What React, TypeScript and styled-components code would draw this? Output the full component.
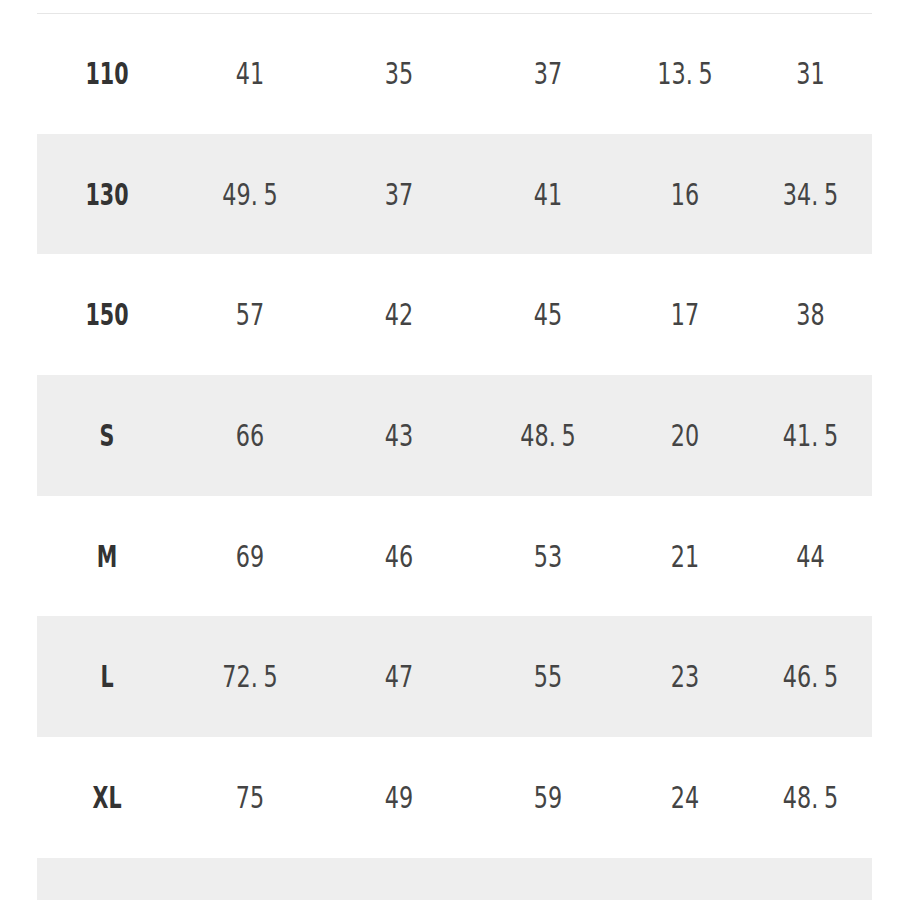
import React from "react";
import styled, { createGlobalStyle } from "styled-components";

const GlobalStyle = createGlobalStyle`
  html, body {
    margin: 0;
    padding: 0;
    background: #fff;
  }
  body {
    font-family: "DejaVu Sans Condensed", "Liberation Sans Narrow", "Liberation Sans", sans-serif;
    color: #3b3b3b;
  }
`;

const Page = styled.div`
  width: 900px;
  height: 900px;
  overflow: hidden;
  padding: 13px 0 0 37px;
  box-sizing: border-box;
`;

const Table = styled.div`
  width: 835px;
`;

const Row = styled.div<{ shaded: boolean }>`
  display: grid;
  grid-template-columns: 140px 146px 152px 146px 128px 123px;
  height: 120.7px;
  box-sizing: border-box;
  align-items: center;
  background: ${(p) => (p.shaded ? "#eeeeee" : "#ffffff")};

  &:first-child {
    border-top: 1px solid #e6e6e6;
  }
`;

const Cell = styled.div<{ head?: boolean }>`
  text-align: center;
  font-size: 31px;
  font-weight: ${(p) => (p.head ? 700 : 400)};
  color: ${(p) => (p.head ? "#333" : "#444")};
  line-height: 1;
  transform: scaleX(${(p) => (p.head ? 0.74 : 0.8)});
`;

const Dot = styled.span`
  margin-right: 7px;
`;

const rows: string[][] = [
  ["110", "41", "35", "37", "13.5", "31"],
  ["130", "49.5", "37", "41", "16", "34.5"],
  ["150", "57", "42", "45", "17", "38"],
  ["S", "66", "43", "48.5", "20", "41.5"],
  ["M", "69", "46", "53", "21", "44"],
  ["L", "72.5", "47", "55", "23", "46.5"],
  ["XL", "75", "49", "59", "24", "48.5"],
  ["", "", "", "", "", ""],
];

const Value = ({ text }: { text: string }) => {
  const parts = text.split(".");
  if (parts.length < 2) return <>{text}</>;
  return (
    <>
      {parts[0]}
      <Dot>.</Dot>
      {parts[1]}
    </>
  );
};

const App = () => {
  return (
    <>
      <GlobalStyle />
      <Page>
        <Table>
          {rows.map((row, i) => (
            <Row key={i} shaded={i % 2 === 1}>
              {row.map((v, j) => (
                <Cell key={j} head={j === 0}>
                  <Value text={v} />
                </Cell>
              ))}
            </Row>
          ))}
        </Table>
      </Page>
    </>
  );
};

export default App;
